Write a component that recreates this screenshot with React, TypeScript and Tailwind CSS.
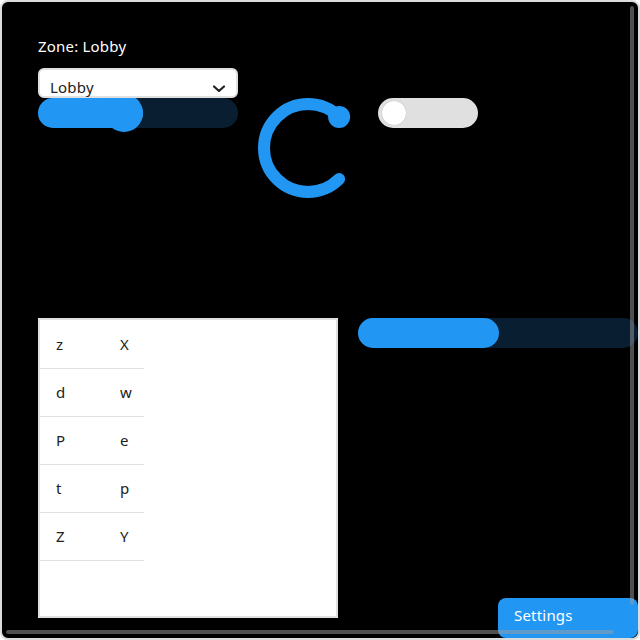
import React from "react";

const rows: [string, string][] = [
    ["z", "X"],
    ["d", "w"],
    ["P", "e"],
    ["t", "p"],
    ["Z", "Y"],
];

function Arc() {
    // indicator arc from 45deg round to 315deg, knob at the end
    return (
        <svg width="100" height="100" viewBox="0 0 100 100" className="shrink-0">
            <path
                d="M81.11 81.11 A44 44 0 1 1 81.11 18.89"
                fill="none"
                stroke="#2196F3"
                strokeWidth="12"
                strokeLinecap="round"
            />
            <circle cx="81.11" cy="18.89" r="11" fill="#2196F3" />
        </svg>
    );
}

export default function App() {
    return (
        <div className="w-[640px] h-[640px] relative overflow-hidden rounded-lg border-2 border-[#dcdcdc] bg-black font-['Noto_Sans',sans-serif] text-[15px] tracking-[0.2px]">
            <div className="pl-[36px] pt-[36px]">
                <div className="h-4 leading-4 text-white">Zone: Lobby</div>

                {/* Dropdown */}
                <div className="relative z-10 mt-[14px] w-[200px] h-[30px] rounded-md border-2 border-[#e0e0e0] bg-white flex items-start justify-between pl-[10px] pr-[11px] pt-[9px]">
                    <span className="h-4 leading-4 text-[#212121]">Lobby</span>
                    <svg width="12" height="8" viewBox="0 0 12 8" className="mt-[6px]">
                        <polyline points="1,1.5 6,6 11,1.5" fill="none" stroke="#212121" strokeWidth="2.2" strokeLinecap="round" strokeLinejoin="round" />
                    </svg>
                </div>

                <div className="flex items-start gap-5">
                    {/* Slider */}
                    <div className="relative shrink-0 w-[200px] h-[30px] rounded-full bg-[#0a1e32]">
                        <div className="h-full w-[105px] rounded-full bg-[#2196F3]" />
                        <div className="absolute left-[67px] top-[-4px] w-[38px] h-[38px] rounded-full bg-[#2196F3]" />
                    </div>

                    <Arc />

                    {/* Switch */}
                    <div className="relative shrink-0 w-[100px] h-[30px] rounded-full bg-[#e0e0e0]">
                        <div className="absolute left-[4px] top-[3px] w-6 h-6 rounded-full bg-white shadow-[0_0_1px_#9e9e9e]" />
                    </div>
                </div>

                <div className="mt-[120px] flex items-start gap-5">
                    {/* Table */}
                    <div className="shrink-0 w-[300px] h-[300px] border-2 border-[#e0e0e0] bg-white">
                        <div className="w-[104px] pt-[1px]">
                            {rows.map(([a, b], i) => (
                                <div key={i} className="h-12 flex items-center border-b border-[#e0e0e0] text-[#212121]">
                                    <span className="w-16 pl-4">{a}</span>
                                    <span className="w-10 pl-4">{b}</span>
                                </div>
                            ))}
                        </div>
                    </div>

                    {/* Bar */}
                    <div className="shrink-0 w-[280px] h-[30px] rounded-full bg-[#0a1e32]">
                        <div className="h-full w-[141px] rounded-full bg-[#2196F3]" />
                    </div>
                </div>
            </div>

            <button className="absolute right-0 bottom-0 w-[140px] h-10 rounded-lg bg-[#2196F3] text-white text-left pl-4 pb-[5px]">
                Settings
            </button>

            {/* scrollbars */}
            <div className="absolute right-[4px] top-[4px] w-[4px] h-[599px] rounded-full bg-[#9e9e9e]/50" />
            <div className="absolute left-[4px] bottom-[4px] h-[4px] w-[608px] rounded-full bg-[#9e9e9e]/50" />
        </div>
    );
}
